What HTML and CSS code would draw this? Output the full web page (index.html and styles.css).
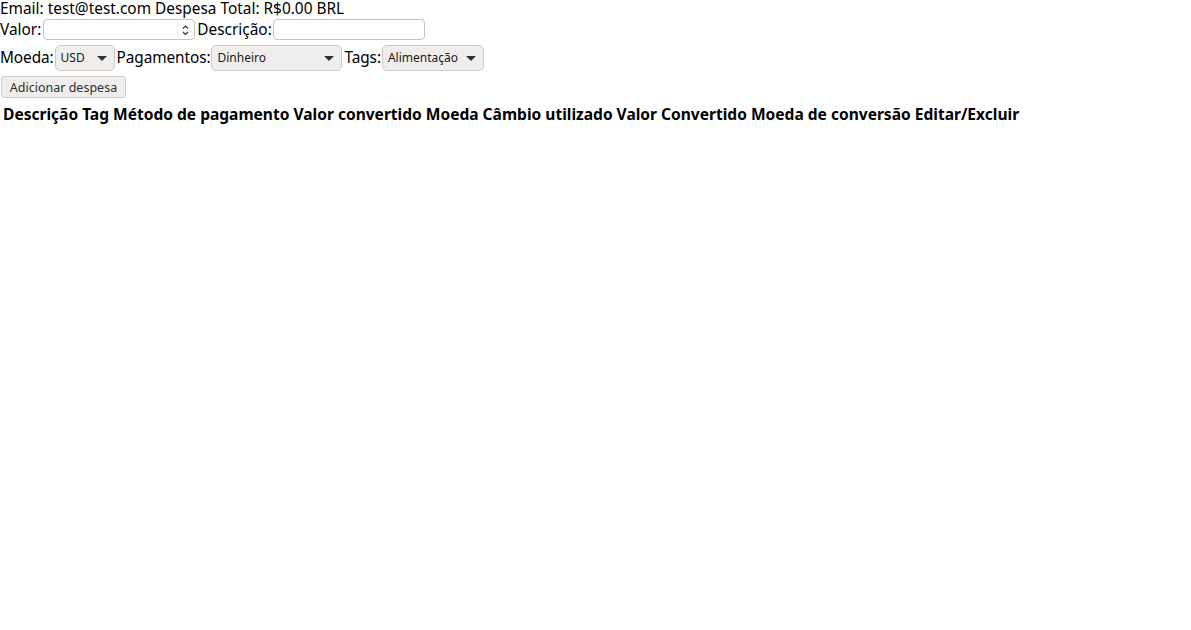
FILE: index.html
```html
<!DOCTYPE html>
<html lang="pt-BR">
<head>
<meta charset="utf-8">
<title>Carteira</title>
<link rel="stylesheet" href="styles.css">
</head>
<body>
<div class="app">
  <header class="header">
    <span>Email: test@test.com</span>
    <span>Despesa Total: R$0.00 BRL</span>
  </header>
  <form class="form">
    <div class="row row-inputs">
      <label class="field">Valor:<span class="num-wrap"><input class="input input-num" type="text"><span class="spin"><svg width="9" height="14" viewBox="0 0 9 14"><path d="M2 5.5 L4.5 3 L7 5.5" fill="none" stroke="#2e3436" stroke-width="1.2"/><path d="M2 9 L4.5 11.5 L7 9" fill="none" stroke="#2e3436" stroke-width="1.2"/></svg></span></span></label>
      <label class="field">Descrição:<input class="input input-text" type="text"></label>
    </div>
    <div class="row row-selects">
      <label class="field">Moeda:<span class="sel sel-moeda"><span class="sel-text">USD</span><span class="caret"></span></span></label>
      <label class="field">Pagamentos:<span class="sel sel-pag"><span class="sel-text">Dinheiro</span><span class="caret"></span></span></label>
      <label class="field">Tags:<span class="sel sel-tags"><span class="sel-text">Alimentação</span><span class="caret"></span></span></label>
    </div>
    <div class="row row-btn">
      <button class="btn" type="button">Adicionar despesa</button>
    </div>
  </form>
  <table class="table">
    <thead>
      <tr>
        <th>Descrição</th>
        <th>Tag</th>
        <th>Método de pagamento</th>
        <th>Valor convertido</th>
        <th>Moeda</th>
        <th>Câmbio utilizado</th>
        <th>Valor Convertido</th>
        <th>Moeda de conversão</th>
        <th>Editar/Excluir</th>
      </tr>
    </thead>
  </table>
</div>
</body>
</html>
```

FILE: styles.css
```css
* { box-sizing: border-box; }
html, body { margin: 0; padding: 0; background: #fff; }
body {
  font-family: "Noto Sans", "Liberation Sans", sans-serif;
  font-size: 15.4px;
  color: #000;
  line-height: 18px;
}
.header { display: flex; gap: 4px; height: 18px; }
.form { margin: 0; }
.row { display: flex; align-items: center; gap: 2px; }
.row-inputs { height: 23px; margin-top: 0; }
.row-selects { height: 26px; margin-top: 4px; }
.row-btn { margin-top: 5px; padding-left: 1px; height: 22px; }
.field { display: flex; align-items: center; gap: 1px; }
.row-selects .field { letter-spacing: -0.1px; }
.input {
  font-family: "Noto Sans", sans-serif;
  font-size: 13px;
  height: 21px;
  width: 152px;
  border: 1px solid #c5c1bc;
  border-radius: 4px;
  background: #fff;
  padding: 0 4px;
  margin: 0;
  outline: none;
}
.num-wrap { position: relative; display: inline-flex; margin-left: 1px; }
.spin {
  position: absolute; right: 3px; top: 2px;
  width: 15px; height: 17px;
  display: flex; align-items: center; justify-content: center;
  border-left: 1px solid #ecebe9;
}
.sel {
  display: inline-flex; align-items: center; justify-content: space-between;
  height: 26px;
  border: 1px solid #cfcac5;
  border-radius: 5px;
  background: #efeeed;
  font-family: "Noto Sans", sans-serif;
  font-size: 12px;
  letter-spacing: 0;
  color: #1a1a1a;
  padding: 0 7px 0 5px;
}
.sel-moeda { width: 60px; }
.sel-pag { width: 131px; }
.sel-tags { width: 102px; }
.caret {
  width: 0; height: 0;
  border-left: 5px solid transparent;
  border-right: 5px solid transparent;
  border-top: 5px solid #2e3436;
}
.btn {
  font-family: "Noto Sans", sans-serif;
  font-size: 12.5px;
  height: 22px;
  width: 125px;
  padding: 0;
  border: 1px solid #cfcac5;
  border-radius: 3px;
  background: #efeeed;
  color: #2e2e2e;
  margin: 0;
}
.table { border-spacing: 2px; margin-top: 4px; }
.table th { font-size: 15.55px; font-weight: bold; padding: 1px; text-align: center; white-space: nowrap; }
```
